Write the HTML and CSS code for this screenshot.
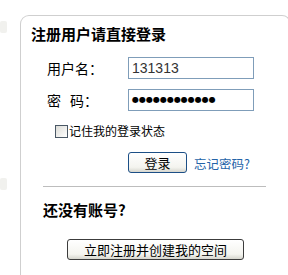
FILE: index.html
```html
<!DOCTYPE html>
<html lang="zh">
<head>
<meta charset="utf-8">
<link rel="stylesheet" href="styles.css">
</head>
<body>
<div class="page">
  <div class="side">
    <span class="smudge s1"></span>
    <span class="smudge s2"></span>
  </div>
  <div class="panel">
    <h2 class="title">注册用户请直接登录</h2>
    <div class="row">
      <span class="label">用户名：</span>
      <div class="field">131313</div>
    </div>
    <div class="row row2">
      <span class="label">密<span class="gap"></span>码：</span>
      <div class="field dots">●●●●●●●●●●●●</div>
    </div>
    <div class="check-row">
      <span class="checkbox"></span>
      <span class="check-text">记住我的登录状态</span>
    </div>
    <div class="btn-row">
      <button class="btn btn-login">登录</button>
      <a class="forgot">忘记密码?</a>
    </div>
    <div class="divider"></div>
    <h3 class="subtitle">还没有账号?</h3>
    <div class="reg-row">
      <button class="btn btn-reg">立即注册并创建我的空间</button>
    </div>
  </div>
</div>
</body>
</html>
```

FILE: styles.css
```css
html, body {
  margin: 0;
  padding: 0;
  background: #fff;
}
body {
  font-family: "Noto Sans CJK SC", "DejaVu Sans", sans-serif;
  color: #000;
  width: 288px;
  height: 275px;
  overflow: hidden;
}
.page {
  display: flex;
  padding-top: 15px;
}
.side {
  width: 20px;
  flex: none;
  display: flex;
  flex-direction: column;
}
.smudge {
  display: block;
  width: 7px;
  height: 12px;
  background: #f1f1ee;
  border-radius: 2px;
}
.s1 { margin-top: 6px; }
.s2 { margin-top: 145px; }
.panel {
  flex: 1;
  margin-right: -3px;
  height: 262px;
  border: 1px solid #cfcfcf;
  border-bottom: none;
  border-radius: 9px 9px 0 0;
  box-sizing: border-box;
}
.title {
  margin: 8px 0 0 10px;
  font-size: 15px;
  font-weight: bold;
  line-height: 20px;
}
.row {
  display: flex;
  align-items: center;
  margin-top: 13px;
  padding-left: 26px;
}
.row2 { margin-top: 10px; }
.label {
  width: 81px;
  font-size: 14px;
  line-height: 21px;
}
.gap {
  display: inline-block;
  width: 9px;
}
.field {
  width: 126px;
  height: 22px;
  box-sizing: border-box;
  border: 1px solid #7f9db9;
  font-family: "Liberation Sans", sans-serif;
  font-size: 14px;
  color: #333;
  line-height: 20px;
  padding-left: 3px;
}
.dots {
  font-family: "DejaVu Sans", sans-serif;
  color: #000;
  font-size: 8px;
  line-height: 20px;
}
.check-row {
  display: flex;
  align-items: center;
  margin-top: 13px;
  padding-left: 34px;
}
.checkbox {
  width: 11px;
  height: 11px;
  border: 1px solid #4a5866;
  background: linear-gradient(135deg, #dcdcd7, #fff);
  margin-right: 1px;
}
.check-text {
  font-size: 12px;
  line-height: 14px;
}
.btn-row {
  display: flex;
  align-items: center;
  margin-top: 13px;
  padding-left: 107px;
}
.btn {
  font-family: "Noto Sans CJK SC", sans-serif;
  height: 21px;
  box-sizing: border-box;
  padding: 0;
  border-radius: 3px;
  background: linear-gradient(#ffffff, #f4f4ef 75%, #d6d6ce);
  color: #000;
  font-size: 13px;
  line-height: 17px;
}
.btn-login {
  width: 59px;
  border: 1px solid #1c4f86;
}
.forgot {
  margin-left: 7px;
  color: #2463a8;
  font-size: 12.5px;
  margin-top: 3px;
}
.divider {
  margin: 13px 0 0 22px;
  width: 223px;
  height: 1px;
  background: #bdbdbd;
}
.subtitle {
  margin: 13px 0 0 22px;
  font-size: 15px;
  font-weight: bold;
  line-height: 20px;
}
.reg-row {
  margin-top: 16px;
  padding-left: 46px;
}
.btn-reg {
  width: 177px;
  border: 1px solid #3c3c3c;
  font-size: 13px;
}
```
